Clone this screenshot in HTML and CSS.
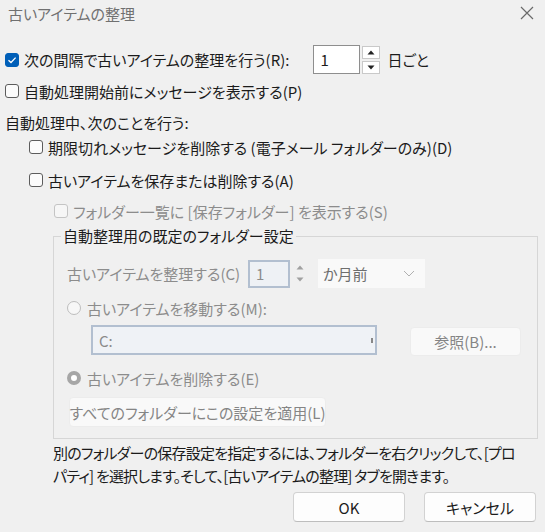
FILE: index.html
```html
<!DOCTYPE html>
<html lang="ja">
<head>
<meta charset="utf-8">
<link rel="stylesheet" href="styles.css">
</head>
<body>
<div class="dialog">
  <div class="titlebar">
    <span class="title">古いアイテムの整理</span>
    <svg class="close" width="14" height="14" viewBox="0 0 14 14"><path d="M1 1L13 13M13 1L1 13" stroke="#6a6a6a" stroke-width="1.2" fill="none"/></svg>
  </div>
  <div class="content">
    <div class="row r1">
      <span class="cb checked"><svg width="10" height="10" viewBox="0 0 10 10"><path d="M1.5 5.2L4 7.5L8.6 2.6" stroke="#fff" stroke-width="1.3" fill="none"/></svg></span>
      <span class="lbl">次の間隔で古いアイテムの整理を行う(R):</span>
      <span class="num">1</span>
      <span class="spin">
        <span class="sb"><svg width="8" height="5" viewBox="0 0 8 5"><path d="M4 0.5L7.5 4.5H0.5Z" fill="#222"/></svg></span>
        <span class="sb"><svg width="8" height="5" viewBox="0 0 8 5"><path d="M4 4.5L7.5 0.5H0.5Z" fill="#222"/></svg></span>
      </span>
      <span class="unit">日ごと</span>
    </div>
    <div class="row r2">
      <span class="cb"></span>
      <span class="lbl">自動処理開始前にメッセージを表示する(P)</span>
    </div>
    <div class="row r3">自動処理中、次のことを行う:</div>
    <div class="row r4 ind1">
      <span class="cb"></span>
      <span class="lbl">期限切れメッセージを削除する (電子メール フォルダーのみ)(D)</span>
    </div>
    <div class="row r5 ind1">
      <span class="cb"></span>
      <span class="lbl">古いアイテムを保存または削除する(A)</span>
    </div>
    <div class="row r6 ind2 dis">
      <span class="cb dcb"></span>
      <span class="lbl">フォルダー一覧に [保存フォルダー] を表示する(S)</span>
    </div>
    <fieldset class="group">
      <legend>自動整理用の既定のフォルダー設定</legend>
      <div class="grow gc dis">
        <span class="lbl">古いアイテムを整理する(C)</span>
        <span class="dnum">1</span>
        <span class="dspin">
          <svg width="8" height="5" viewBox="0 0 8 5"><path d="M4 0.5L7.5 4.5H0.5Z" fill="#a0a0a0"/></svg>
          <svg width="8" height="5" viewBox="0 0 8 5"><path d="M4 4.5L7.5 0.5H0.5Z" fill="#a0a0a0"/></svg>
        </span>
        <span class="combo">か月前<svg width="12" height="7" viewBox="0 0 12 7"><path d="M1 1L6 6L11 1" stroke="#b0b0b0" stroke-width="1" fill="none"/></svg></span>
      </div>
      <div class="grow gm dis">
        <span class="radio"></span>
        <span class="lbl">古いアイテムを移動する(M):</span>
      </div>
      <div class="grow gp dis">
        <span class="path">C:<span class="tick"></span></span>
        <span class="dbtn browse">参照(B)...</span>
      </div>
      <div class="grow ge dis">
        <span class="radio on"></span>
        <span class="lbl">古いアイテムを削除する(E)</span>
      </div>
      <div class="grow ga">
        <span class="dbtn apply">すべてのフォルダーにこの設定を適用(L)</span>
      </div>
    </fieldset>
    <p class="help">別のフォルダーの保存設定を指定するには、フォルダーを右クリックして、[プロ<br>パティ] を選択します。そして、[古いアイテムの整理] タブを開きます。</p>
    <div class="buttons">
      <span class="btn">OK</span>
      <span class="btn">キャンセル</span>
    </div>
  </div>
</div>
</body>
</html>
```
FILE: styles.css
```css
html, body {
  margin: 0;
  padding: 0;
  background: #f0f0f0;
}
body {
  font-family: "Noto Sans CJK JP", "Noto Sans", sans-serif;
  font-size: 15px;
  color: #1b1b1b;
  font-feature-settings: "palt";
  width: 545px;
  height: 532px;
  overflow: hidden;
}
.dialog {
  display: flex;
  flex-direction: column;
}
.titlebar {
  height: 26px;
  display: flex;
  align-items: center;
  justify-content: space-between;
  padding: 0 11px 0 8px;
}
.title {
  color: #707070;
  font-size: 15px;
}
.close { display: block; }
.content {
  padding: 0 5px;
}
.row {
  display: flex;
  align-items: center;
  height: 24px;
  white-space: nowrap;
}
.lbl { white-space: nowrap; }
.r1 { margin-top: 19px; height: 29px; }
.r2 { margin-top: 5px; }
.r3 { margin-top: 7px; }
.r4 { margin-top: 1px; }
.r5 { margin-top: 9px; }
.r6 { margin-top: 7px; }
.ind1 { padding-left: 24px; }
.ind2 { padding-left: 49px; }
.dis { color: #8c8c8c; }

.cb {
  width: 14px;
  height: 14px;
  box-sizing: border-box;
  border: 1px solid #5c5c5c;
  border-radius: 3px;
  background: #fbfbfb;
  margin-right: 5px;
  flex: none;
  display: flex;
  align-items: center;
  justify-content: center;
}
.cb.checked {
  background: #005fb8;
  border-color: #005fb8;
}
.cb.dcb {
  border-color: #c4c4c4;
  background: #f6f6f6;
}
.num {
  margin-left: 24px;
  width: 47px;
  height: 29px;
  box-sizing: border-box;
  border: 1px solid #8e8e8e;
  background: #fff;
  display: flex;
  align-items: center;
  padding-left: 6px;
}
.spin {
  display: flex;
  flex-direction: column;
  gap: 2px;
  margin-left: 2px;
}
.sb {
  width: 18px;
  height: 13px;
  box-sizing: border-box;
  border: 1px solid #c9c9c9;
  background: #fff;
  display: flex;
  align-items: center;
  justify-content: center;
}
.unit { margin-left: 7px; }

.group {
  margin: 2px 0 0 48px;
  padding: 0 0 11px 13px;
  border: 1px solid #d6d6d6;
  width: 485px;
  box-sizing: border-box;
  min-width: 0;
}
.group legend {
  padding: 0 2px;
  margin-left: -6px;
  color: #1b1b1b;
  line-height: 22px;
}
.grow {
  display: flex;
  align-items: center;
  white-space: nowrap;
}
.gc { margin-top: 12px; height: 29px; }
.dnum {
  margin-left: 8px;
  width: 42px;
  height: 28px;
  box-sizing: border-box;
  border: 2px solid #b2bfd0;
  background: #eef1f5;
  color: #8c8c8c;
  display: flex;
  align-items: center;
  padding-left: 6px;
}
.dspin {
  display: flex;
  flex-direction: column;
  gap: 7px;
  margin-left: 3px;
  width: 14px;
  align-items: center;
}
.dspin svg { display: block; }
.combo {
  margin-left: 11px;
  width: 107px;
  height: 29px;
  box-sizing: border-box;
  background: #f9f9f9;
  display: flex;
  align-items: center;
  justify-content: space-between;
  padding: 0 10px 0 5px;
  color: #6e6e6e;
}
.gm { margin-top: 9px; height: 22px; }
.radio {
  width: 14px;
  height: 14px;
  box-sizing: border-box;
  border-radius: 50%;
  border: 1px solid #bdbdbd;
  background: #f7f7f7;
  margin-right: 6px;
  flex: none;
}
.radio.on {
  border: 4px solid #a6a6a6;
  background: #fff;
}
.gp { margin-top: 6px; height: 30px; padding-left: 24px; }
.path {
  width: 286px;
  height: 30px;
  box-sizing: border-box;
  border: 2px solid #b2bfd0;
  background: #eff2f6;
  display: flex;
  align-items: center;
  padding-left: 6px;
  color: #8a8a8a;
  position: relative;
}
.tick {
  position: absolute;
  right: 2px;
  top: 11px;
  width: 2px;
  height: 5px;
  background: #888;
}
.dbtn {
  background: #f9f9f9;
  border: 1px solid #ececec;
  border-radius: 4px;
  box-sizing: border-box;
  color: #858585;
  display: flex;
  align-items: center;
  justify-content: center;
}
.browse {
  margin-left: 33px;
  width: 111px;
  height: 29px;
  margin-top: 3px;
}
.ge { margin-top: 12px; height: 22px; }
.ga { margin-top: 8px; }
.apply {
  margin-left: 2px;
  width: 257px;
  height: 30px;
}
.help {
  margin: 2px 0 0 48px;
  line-height: 23px;
  white-space: nowrap;
  letter-spacing: -0.8px;
}
.buttons {
  display: flex;
  justify-content: flex-end;
  gap: 19px;
  margin-top: 5px;
  padding-right: 4px;
}
.btn {
  width: 112px;
  height: 30px;
  box-sizing: border-box;
  background: #fdfdfd;
  border: 1px solid #d2d2d2;
  border-bottom-color: #bdbdbd;
  border-radius: 4px;
  display: flex;
  align-items: center;
  justify-content: center;
  color: #1b1b1b;
}
```
